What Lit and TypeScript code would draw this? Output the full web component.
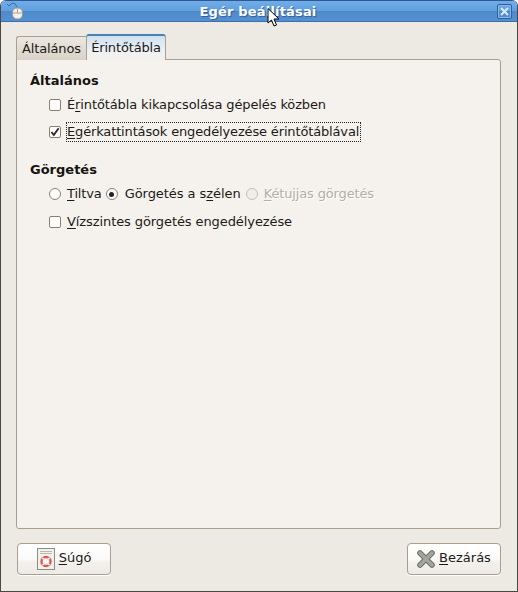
import { LitElement, html, css } from "lit";
import { customElement } from "lit/decorators.js";

const check = (on: boolean) => html`<span class="box">${on ? html`<svg width="12" height="12" viewBox="0 0 12 12"><path d="M2.4 6 L4.8 9 L9.6 2.2" fill="none" stroke="#2c2a26" stroke-width="1.9"/></svg>` : ""}</span>`;
const radio = (on: boolean, dis = false) => html`<span class="radio ${dis ? "dis" : ""} ${on ? "on" : ""}">${on ? html`<i></i>` : ""}</span>`;

@customElement("app-root")
export class AppRoot extends LitElement {
  static styles = css`
    :host { display: block; width: 518px; height: 592px; font: 13px "DejaVu Sans", sans-serif; letter-spacing: -0.15px; color: #1a1a18; }
    .win { position: relative; width: 518px; height: 592px; box-sizing: border-box; display: flex; flex-direction: column; background: #edeae4; border: 1px solid #4a4842; border-top: 0; border-radius: 6px 6px 0 0; overflow: hidden; }
    .title { flex: none; height: 22px; box-sizing: border-box; margin: 0 -1px; display: flex; align-items: center; justify-content: center; padding: 0 4px 0 2px; position: relative; border-top: 1px solid #2c5a90; border-bottom: 1px solid #3d6ea8; background: linear-gradient(#70ace8 0, #629fdf 48%, #4f8acb 52%, #5590d2 100%); color: #fff; font-weight: bold; letter-spacing: 0.18px; text-shadow: 1px 1px 1px #2e5f98; }
    .micon { position: absolute; left: 6px; top: 0; }
    .close { position: absolute; right: 6px; top: 3px; width: 13px; height: 13px; border: 1px solid #2f5f98; border-radius: 2px; box-shadow: inset 0 0 0 1px #8ab8e8; display: flex; align-items: center; justify-content: center; }
    .cursor { position: absolute; left: 266px; top: 8px; }
    .body { flex: 1; display: flex; flex-direction: column; padding: 12px 16px 16px 15px; min-height: 0; }
    .tabs { display: flex; height: 26px; flex: none; align-items: flex-end; position: relative; z-index: 1; margin-bottom: -1px; }
    .tab { box-sizing: border-box; display: flex; align-items: center; justify-content: center; }
    .t1 { width: 70px; height: 24px; padding: 0 0 1px 0; background: linear-gradient(#ece7e0, #d9d2c8); border: 1px solid #a89f90; border-bottom: 0; border-right: 0; border-radius: 3px 0 0 0; }
    .t2 { width: 80px; height: 26px; padding-bottom: 2px; background: linear-gradient(#cfe0f2 0, #eef1f3 60%, #f4f1ed 100%); border: 1px solid #a89f90; border-top: 2px solid #4a80b8; border-bottom: 0; border-radius: 3px 3px 0 0; }
    .panel { flex: 1; box-sizing: border-box; background: #f5f2ee; border: 1px solid #a89f90; border-radius: 0 3px 3px 3px; padding: 12px 13px; display: flex; flex-direction: column; }
    h3 { margin: 0; font-size: 13px; font-weight: bold; line-height: 17px; letter-spacing: 0; color: #15140f; }
    .rows { display: flex; flex-direction: column; gap: 7px; padding: 6px 0 0 19px; }
    .row { display: flex; align-items: center; height: 20px; }
    .row.last { margin-top: 1px; }
    .sec2 { margin-top: 19px; }
    .box { flex: none; box-sizing: border-box; width: 12px; height: 12px; margin-right: 6px; background: #fff; border: 1px solid #8a8070; border-radius: 2px; display: flex; align-items: center; justify-content: center; }
    .box svg { flex: none; margin: -1px; }
    .label { padding: 1px 0; line-height: 16px; white-space: nowrap; }
    .focus { outline: 1px dotted #222; padding: 1px 1px 1px 0; }
    .radio { flex: none; box-sizing: border-box; width: 12px; height: 12px; margin-right: 6px; border: 1px solid #8a8070; border-radius: 50%; background: #fff; display: flex; align-items: center; justify-content: center; }
    .radio.on { margin-left: 4px; margin-right: 7px; }
    .radio i { width: 5px; height: 5px; border-radius: 50%; background: #222; }
    .radio.dis { border-color: #c4bdb2; background: #f1eeea; margin-left: 5px; }
    .dim { color: #b5aea3; text-shadow: 1px 1px 0 #fff; }
    .wide { letter-spacing: -0.05px; }
    .mid { letter-spacing: -0.09px; }
    .first { letter-spacing: -0.125px; }
    u { text-underline-offset: 2px; }
    .foot { flex: none; display: flex; justify-content: space-between; padding: 14px 0 0 1px; }
    .btn { box-sizing: border-box; width: 94px; height: 32px; display: flex; align-items: center; justify-content: center; gap: 4px; border: 1px solid #a89f90; border-radius: 4px; background: linear-gradient(#ffffff 0, #fbfaf8 50%, #f3f1ed 60%, #eeebe6 100%); box-shadow: 0 1px 0 #fff; letter-spacing: 0; }
    .btn span { margin-bottom: 4px; }
  `;

  render() {
    return html`<div class="win">
      <div class="title">
        <svg class="micon" width="18" height="20" viewBox="0 0 18 20">
          <path d="M1 3 L3 5 L6 2 Q9 1 11 6" fill="none" stroke="#3f6a9c" stroke-width="1"/>
          <rect x="6.5" y="7" width="10" height="11" rx="4.5" fill="#f2f0ea" stroke="#9a968c"/>
          <path d="M11.5 7.5 V12 M7 12 H16" stroke="#a8a498" stroke-width="1"/>
        </svg>
        <span>Egér beállításai</span>
        <span class="close"><svg width="11" height="11" viewBox="0 0 11 11"><path d="M2 2 L9 9 M9 2 L2 9" stroke="#dcebfa" stroke-width="2"/></svg></span>
      </div>
      <div class="body">
        <div class="tabs">
          <div class="tab t1">Általános</div>
          <div class="tab t2">Érintőtábla</div>
        </div>
        <div class="panel">
          <h3>Általános</h3>
          <div class="rows">
            <div class="row">${check(false)}<span class="label first">É<u>r</u>intőtábla kikapcsolása gépelés közben</span></div>
            <div class="row">${check(true)}<span class="label focus"><u>E</u>gérkattintások engedélyezése érintőtáblával</span></div>
          </div>
          <h3 class="sec2">Görgetés</h3>
          <div class="rows">
            <div class="row">
              ${radio(false)}<span class="label"><u>T</u>iltva</span>
              ${radio(true)}<span class="label wide">Görgetés a s<u>z</u>élen</span>
              ${radio(false, true)}<span class="label dim"><u>K</u>étujjas görgetés</span>
            </div>
            <div class="row last">${check(false)}<span class="label mid"><u>V</u>ízszintes görgetés engedélyezése</span></div>
          </div>
        </div>
        <div class="foot">
          <div class="btn">
            <svg width="18" height="22" viewBox="0 0 18 22">
              <rect x="0.5" y="0.5" width="17" height="21" fill="#f1f1ee" stroke="#8c8c86"/>
              <path d="M3 3.5 H15 M3 5.5 H15" stroke="#b8b8b2"/>
              <circle cx="9" cy="13.5" r="4.5" fill="#fff" stroke="#dc5a50" stroke-width="2.4"/>
              <path d="M5.4 9.9 L7.6 12.1 M12.6 9.9 L10.4 12.1 M5.4 17.1 L7.6 14.9 M12.6 17.1 L10.4 14.9" stroke="#ece9e4" stroke-width="1.6"/>
            </svg>
            <span><u>S</u>úgó</span>
          </div>
          <div class="btn">
            <svg width="18" height="18" viewBox="0 0 18 18">
              <path d="M3 3 L15 15 M15 3 L3 15" stroke="#6f6f6a" stroke-width="5.6" stroke-linecap="round"/>
              <path d="M3 3 L15 15 M15 3 L3 15" stroke="#a4a49e" stroke-width="3.6" stroke-linecap="round"/>
            </svg>
            <span><u>B</u>ezárás</span>
          </div>
        </div>
      </div>
      <svg class="cursor" width="14" height="20" viewBox="0 0 14 20">
        <path d="M1 0.5 V15 L4.5 12 L7 18 L9.5 17 L7 11 H12 Z" fill="#fff" stroke="#000" stroke-width="1"/>
      </svg>
    </div>`;
  }
}
